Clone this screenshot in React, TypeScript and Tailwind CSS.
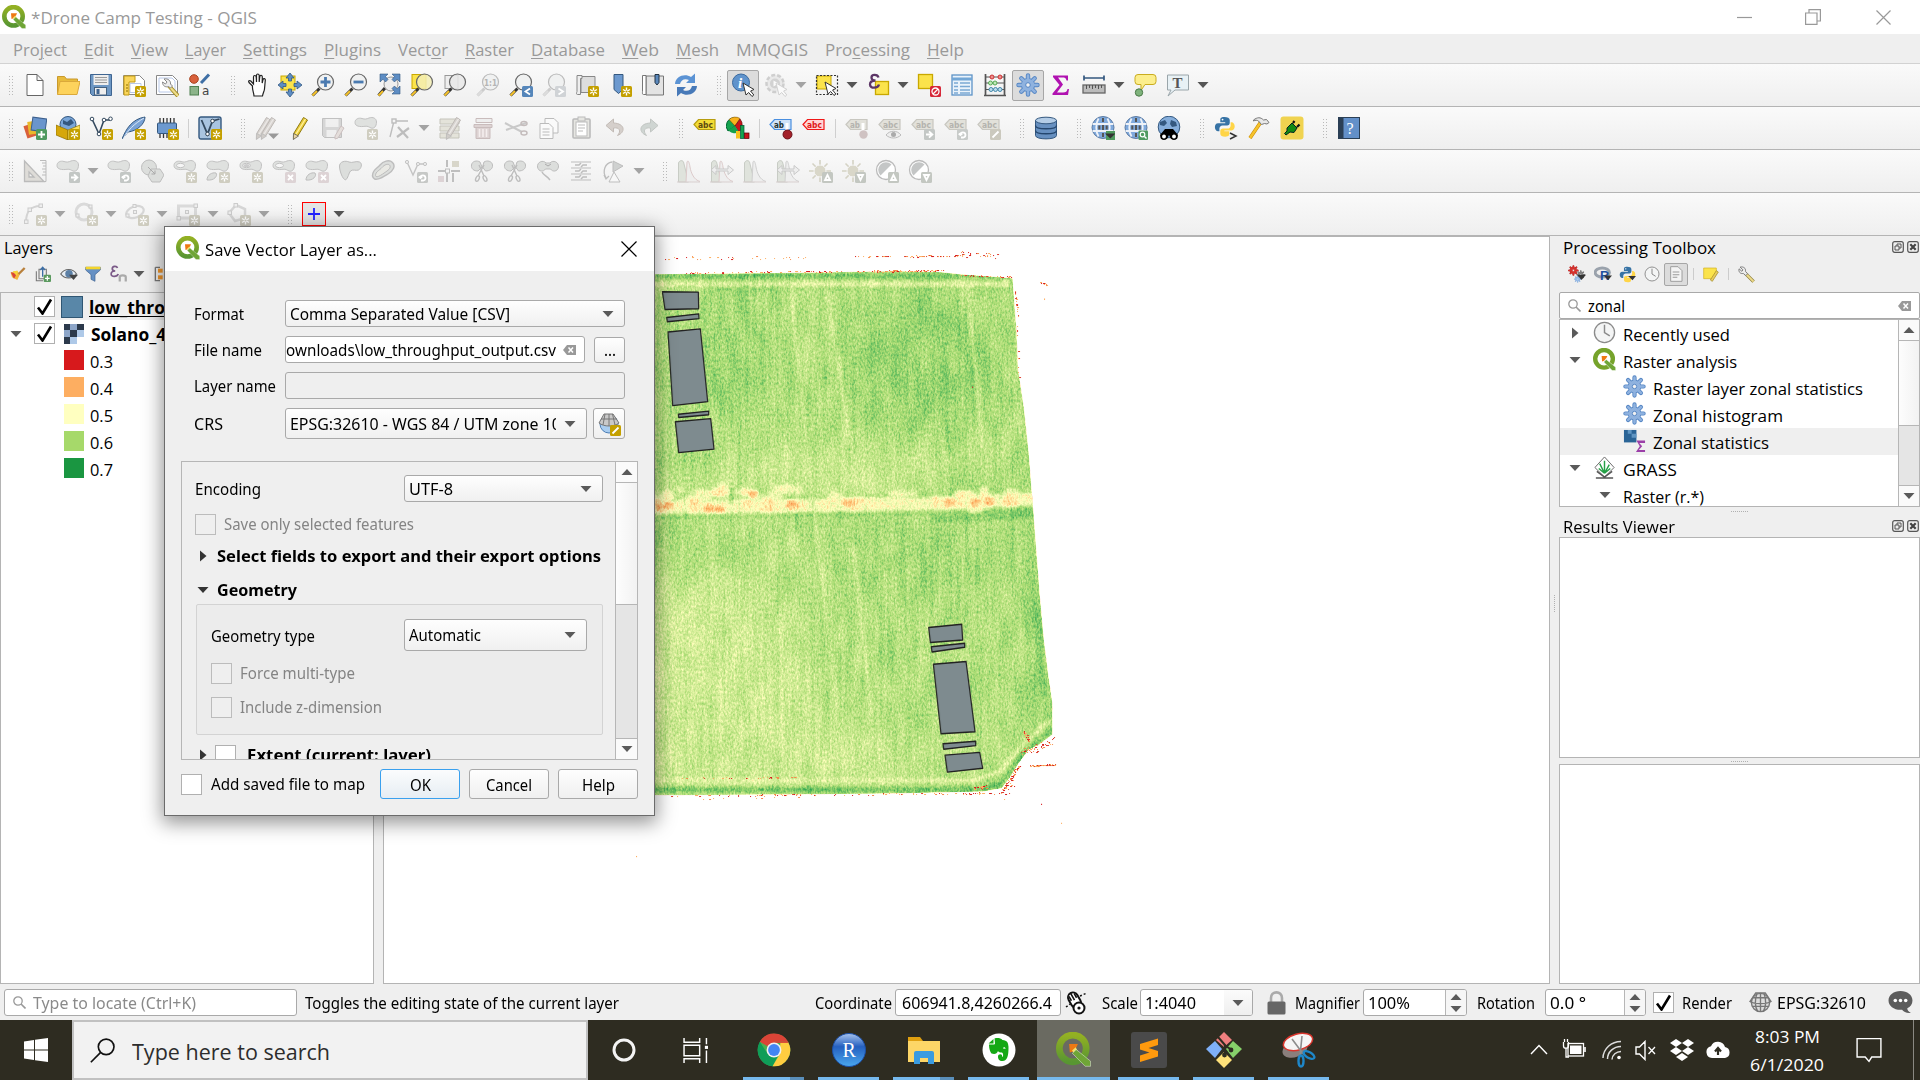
import { useLayoutEffect, useRef, type ReactNode } from "react";

/* ---------- text ---------- */

const UI = "font-['Open_Sans',sans-serif] text-[17.2px]";
const DLG = "font-['Noto_Sans','Open_Sans',sans-serif] text-[16px]";

/** Single-line label whose glyphs are condensed to an exact width. */
function Fit({ w, className = "", children }: { w: number; className?: string; children: ReactNode }) {
  const inner = useRef<HTMLSpanElement>(null);
  useLayoutEffect(() => {
    const el = inner.current;
    if (!el) return;
    el.style.transform = "none";
    const natural = el.getBoundingClientRect().width;
    if (natural > 0) el.style.transform = `scaleX(${w / natural})`;
  }, [w]);
  return (
    <span className={`inline-block shrink-0 whitespace-nowrap ${className}`} style={{ width: w }}>
      <span ref={inner} className="inline-block origin-left whitespace-nowrap">
        {children}
      </span>
    </span>
  );
}

/* ---------- small primitives ---------- */

function Svg({ s = 24, vb = 24, children, className = "" }: { s?: number; vb?: number; children: ReactNode; className?: string }) {
  return (
    <svg width={s} height={s} viewBox={`0 0 ${vb} ${vb}`} className={`block shrink-0 ${className}`}>
      {children}
    </svg>
  );
}

function Tri({ dir = "down", color = "#5a5a5a" }: { dir?: "down" | "up" | "right"; color?: string }) {
  const pts = dir === "down" ? "0.5,3 11.5,3 6,9" : dir === "up" ? "0.5,9 11.5,9 6,3" : "3,0.5 9.5,6 3,11.5";
  return (
    <svg width={12} height={12} viewBox="0 0 12 12" className="block shrink-0">
      <polygon points={pts} fill={color} />
    </svg>
  );
}

function QLogo({ s = 24 }: { s?: number }) {
  return (
    <Svg s={s}>
      <defs>
        <linearGradient id="qg" x1="0" y1="0" x2="0" y2="1">
          <stop offset="0" stopColor="#93b023" />
          <stop offset="1" stopColor="#589632" />
        </linearGradient>
      </defs>
      <circle cx="11.5" cy="11.3" r="9.2" fill="none" stroke="url(#qg)" strokeWidth="4.6" />
      <path d="M9 8.3h6l-1 2.2-2.4 2.8L9.5 14z" fill="#ee7913" />
      <path d="M13.5 10.5l1.6 3-2.8 1.2-1.3-2z" fill="#f7e064" />
      <path d="M13.8 12l-2.6 2.6L20 23.5h3.7V20z" fill="#6fa536" stroke="#fff" strokeWidth=".3" />
    </Svg>
  );
}

/* ---------- icon fragments ---------- */

const Star = ({ g = false, x = 13, y = 13 }: { g?: boolean; x?: number; y?: number }) => (
  <g transform={`translate(${x} ${y})`}>
    <rect width="11" height="11" rx="1.5" fill={g ? "#cfcdc0" : "#c4a000"} />
    <path d="M5.5 1.5v8M2 3.5l7 4M9 3.5l-7 4" stroke="#fff" strokeWidth="1.4" />
    <circle cx="5.5" cy="5.5" r="1" fill={g ? "#cfcdc0" : "#c4a000"} />
  </g>
);
const Badge = ({ fill = "#c9c9c9", d, x = 13, y = 13 }: { fill?: string; d: string; x?: number; y?: number }) => (
  <g transform={`translate(${x} ${y})`}>
    <rect width="11" height="11" rx="1.5" fill={fill} />
    <path d={d} stroke="#fff" strokeWidth="1.8" fill="none" />
  </g>
);
const ARROW = "M2 5.5h6M5 2.3l3.4 3.2L5 8.7";
const TURN = "M4 8.5h2.5a2.6 2.6 0 1 0-3.2-3M1.8 4.5l1.6 1.6 1.8-1.6";
const CROSS = "M3 3l5 5M8 3L3 8";
const PLUS = "M5.5 2v7M2 5.5h7";
const BLOB = "M1 6.500C1 3 4.500 1.500 8 2.500c3 1 4.500.5 7-.5 4-1.500 7.500.5 7.500 4 0 4.500-2.500 7-5.500 6-2-.8-3-2.200-6-1.700C6 11 1 10.500 1 6.500z";
const Blob = ({ hole = false }: { hole?: boolean }) => (
  <g fill="#dfe1df" stroke="#c2c2c2">
    <path d={BLOB} />
    {hole && <ellipse cx="7.500" cy="6.500" rx="4" ry="2.200" fill="#f6f6f6" />}
  </g>
);
const Cursor = ({ x = 12, y = 10, g = false }: { x?: number; y?: number; g?: boolean }) => (
  <path transform={`translate(${x} ${y})`} d="M0 0l3 12 2.700-2.500 3.300 4 1.800-1.500-3.200-4L11 6.500z" fill="#fff" stroke={g ? "#bbb" : "#333"} />
);
const Mag = ({ g = false, fill = "#eef0f0", children }: { g?: boolean; fill?: string; children?: ReactNode }) => (
  <g>
    <path d="M8.500 15.500L1.500 22.500" stroke={g ? "#ccc" : "#333"} strokeWidth="3" />
    <path d="M6 18L1.500 22.500" stroke={g ? "#ddd" : "#f6c32c"} strokeWidth="2" />
    <circle cx="14.500" cy="9" r="8" fill={fill} fillOpacity=".85" stroke={g ? "#bbb" : "#666"} strokeWidth="1.200" />
    {children}
  </g>
);
const Pencil = ({ g = false, x = 0 }: { g?: boolean; x?: number }) => (
  <g transform={`translate(${x} 0)`}>
    <path d="M5 17L14.500 1.500l4 2.500L9 19.500 4.500 23z" fill={g ? "#d8d4d0" : "#eacb3a"} stroke={g ? "#bdb8b5" : "#8f7a10"} />
    <path d="M7 18.200L16.500 3" stroke={g ? "#ebe8e6" : "#fff19a"} strokeWidth="1.300" />
    <path d="M4.500 17.500l5 2.500L4.300 23.500z" fill={g ? "#d0ccc8" : "#e8d3a5"} stroke={g ? "#bbb" : "#555"} strokeWidth=".7" />
  </g>
);
const Tag = ({ fill, stroke, color, text = "abc" }: { fill: string; stroke: string; color: string; text?: string }) => (
  <g>
    <path d="M1 8.500L5.500 3.500H22v10H5.500z" fill={fill} stroke={stroke} strokeWidth="1.200" />
    <text x="5" y="11.500" fontSize="8.500" fontWeight="700" fontFamily="DejaVu Sans" textLength={text.length * 5} lengthAdjust="spacingAndGlyphs" fill={color}>
      {text}
    </text>
  </g>
);
const GTag = ({ text = "abc" }: { text?: string }) => <Tag fill="#e2e1da" stroke="#c8c7c0" color="#b4b3ae" text={text} />;
const Globe = () => (
  <g>
    <circle cx="12" cy="11.500" r="11" fill="#7fa9dc" stroke="#5c7ba3" />
    <path d="M7.500 2.500c-3 5-3 13 0 18M16.500 2.500c3 5 3 13 0 18M1.500 8h21M1.500 15h21" stroke="#eef2f8" strokeWidth="1.800" fill="none" />
    <path d="M12 9v5M8.300 9.500v4M15.700 9.500v4M12 2v4M12 17v4" stroke="#555" strokeWidth="2" fill="none" />
  </g>
);
const Scissors = ({ y = 0 }: { y?: number }) => (
  <g transform={`translate(0 ${y})`} fill="none" stroke="#bdbdbd" strokeWidth="1.400">
    <path d="M8 17L14 6M14 17L9 6" />
    <ellipse cx="7.500" cy="19.500" rx="1.600" ry="3" transform="rotate(25 7.500 19.500)" />
    <ellipse cx="15" cy="19.500" rx="1.600" ry="3" transform="rotate(-25 15 19.500)" />
  </g>
);
const Curve = ({ arrows = false, red = false }: { arrows?: boolean; red?: boolean }) => (
  <g>
    <path d="M1.500 23V4c1-3 4-3 5-1l5 20z" fill="#dfe3dc" stroke="#c8ccc5" />
    <path d="M9 23L10 3c1-2 2-1 3 5s4 13 10 14.500" fill="#eee" stroke={red ? "#dccaca" : "#cfcfcf"} />
    <path d="M0 23h23" stroke="#d8cfcf" />
    {arrows && <path d="M1 11l5-4.500V10h12V6.500L23.500 11 18 15.500V12H6v3.500z" fill="#eee" stroke="#c8c8c8" />}
  </g>
);
const Sun = ({ d }: { d: string }) => (
  <g>
    <path d="M11 1v22M0 12h22M3.500 4.500l15 15M18.500 4.500l-15 15" stroke="#d4d2c4" strokeWidth="1.600" />
    <circle cx="11" cy="12" r="6" fill="#d9d7c9" stroke="#f6f6f6" />
    <Badge fill="#c3c7c1" d={d} />
  </g>
);
const Contrast = ({ d }: { d: string }) => (
  <g>
    <circle cx="11" cy="11" r="9.500" fill="#fff" stroke="#bbb" strokeWidth="1.300" />
    <path d="M5.500 16.500A7.500 7.500 0 0 1 16.500 5.500z" fill="#c4c6c6" />
    <Badge fill="#c3c7c1" d={d} />
  </g>
);
const UPD = "M5.500 3L3 8h5z";
const DND = "M5.500 8L3 3h5z";
const Gear = ({ c = "#8fb2df", o = "#5586c4" }: { c?: string; o?: string }) => (
  <g>
    <g stroke={o} strokeWidth="4.400" strokeLinecap="round">
      <path d="M12 2.500v19M2.500 12h19M5.300 5.300l13.400 13.400M18.700 5.300L5.300 18.700" />
    </g>
    <circle cx="12" cy="12" r="7" fill={o} />
    <g stroke={c} strokeWidth="2.600" strokeLinecap="round">
      <path d="M12 2.500v19M2.500 12h19M5.300 5.300l13.400 13.400M18.700 5.300L5.300 18.700" />
    </g>
    <circle cx="12" cy="12" r="6.200" fill={c} />
    <circle cx="12" cy="12" r="2.300" fill="#f2f2f2" stroke={o} />
  </g>
);
const Clock = () => (
  <g fill="none" stroke="#8a8a8a">
    <circle cx="12" cy="12" r="10.500" fill="#f4f5f5" strokeWidth="1.400" />
    <path d="M12 4v8l5.500 3.500" strokeWidth="1.500" />
  </g>
);
const Python = () => (
  <g>
    <path d="M11.500 1C7 1 7 3 7 4.500V7h5.500v1H4.500C2 8 1 10 1 12.500S2.500 17 4.500 17H6v-3c0-2 1.500-3.500 3.500-3.500h5c2 0 3-1.200 3-3V4.500C17.500 2 15 1 11.500 1z" fill="#3773a5" />
    <path d="M12.500 23c4.500 0 4.500-2 4.500-3.500V17h-5.500v-1h8c2.500 0 3.500-2 3.500-4.500S21.500 7 19.500 7H18.500v3.500c0 2-1.500 3.500-3.500 3.500h-5c-2 0-3 1.200-3 3v2.500c0 2.500 2 3.500 5.500 3.500z" fill="#ffd547" />
    <circle cx="9.500" cy="4" r="1" fill="#fff" />
  </g>
);
const Wrench = () => (
  <g>
    <path d="M10 10l12 12" stroke="#8f8140" strokeWidth="4.800" />
    <path d="M11 11l11 11" stroke="#eedc8a" strokeWidth="2.800" />
    <path d="M3 1.500l4 4-1.500 2-4-3.500C.5 8 3 11.500 7.500 10.500l3.500 3 2.500-2.500-3-3.500C11.500 3 7.500.5 3 1.500z" fill="#eee" stroke="#777" strokeWidth="1.300" />
  </g>
);

/* ---------- toolbar icons ---------- */

const icons: Record<string, ReactNode> = {
  newDoc: <path d="M4 1.500h10l6 6V22.500H4zM14 1.500v6h6" fill="#fff" stroke="#666" />,
  open: <g><path d="M1.500 21V3.500h7l2 2.500h11v3z" fill="#e8bb3c" stroke="#c9992b" /><path d="M1.500 21.500L4 8.500h20L21 21.500z" fill="#fdd35c" stroke="#dba93a" /></g>,
  save: <g><path d="M1.500 1.500h21v21h-19l-2-2z" fill="#6d97c4" stroke="#3f6591" /><rect x="4.500" y="2" width="15" height="10" fill="#eee" /><path d="M6 4.500h12M6 7h12M6 9.500h12" stroke="#999" /><rect x="5.500" y="14.500" width="12" height="7.500" fill="#eee" stroke="#44617f" /><rect x="7.500" y="16" width="3" height="5" fill="#3f6591" /></g>,
  layout: <g><path d="M1.500 2.500h16l5 5v14h-21z" fill="#fff" stroke="#888" /><path d="M8 10.500h11v9H8z" fill="none" stroke="#b8c8e8" /><path d="M2 3h11v6H7v13H2z" fill="#f9d55b" stroke="#c39a10" /><path d="M4 12h2M4 15h2M4 18h2" stroke="#8a6d00" /><Star /></g>,
  layoutMgr: <g><path d="M1.500 2.500h16l5 5v14h-21z" fill="#fff" stroke="#888" /><path d="M4 5h13l3 3v11H4z" fill="none" stroke="#b8c8e8" /><path d="M14 13l9 10" stroke="#a08a20" strokeWidth="4" /><path d="M14 13l9 10" stroke="#eedc8a" strokeWidth="2.300" /><path d="M9 6l3 3-1.500 2-3-2c0 4 3 5.500 6 4.500l2 1.500 2-2-2-2C16 8 13 5 9 6z" fill="#eee" stroke="#888" /></g>,
  style: <g><circle cx="6" cy="6" r="4.300" fill="#d9603b" stroke="#a8431f" /><path d="M13 10l8-8.500" stroke="#3f6fa5" strokeWidth="3" /><rect x="2" y="13.500" width="8.500" height="8.500" fill="#8cb48a" stroke="#4f8050" /><text x="14" y="22" fontSize="12" fontFamily="DejaVu Sans" fill="#444">a</text></g>,
  hand: <path d="M6 13L2.500 9.500C1.500 8 3 7 4.300 8L7 11V4c0-2 2.500-2 2.700 0L10 9V2.500c0-2 2.500-2 2.700 0V9l.6-5.500c.3-1.800 2.500-1.500 2.500.3L15.700 10l.8-3.500c.5-1.500 2.500-1 2.300.7L18 16c-.3 2.500-1.500 4-2 7H7.500c0-3-2-6-1.500-10z" transform="translate(1.500 0)" fill="#fff" stroke="#222" strokeWidth="1.200" />,
  panSel: <g><rect x="3" y="3" width="14" height="14" fill="#fbe34b" stroke="#c9a800" /><path d="M12 0l4 5h-2.500v3h-3V5H8zM12 24l-4-5h2.500v-3h3v3H16zM0 12l5-4v2.500h3v3H5V16zM24 12l-5 4v-2.500h-3v-3h3V8z" fill="#5d8dc4" stroke="#34587f" strokeWidth=".8" /></g>,
  zin: <Mag><path d="M14.500 4v10M9.500 9h10" stroke="#4a7ab0" strokeWidth="2.800" /></Mag>,
  zout: <Mag><path d="M9.500 9h10" stroke="#4a7ab0" strokeWidth="2.800" /></Mag>,
  zfull: <g><path d="M8 15L1.500 22.500" stroke="#333" strokeWidth="3" /><path d="M6 18L1.500 22.500" stroke="#f6c32c" strokeWidth="2" /><circle cx="14" cy="11" r="7" fill="#eee" stroke="#999" /><g fill="#5d8dc4" stroke="#34587f" strokeWidth=".6"><path d="M3 1h8L8.500 3.500l2.500 3L8.500 9 6 6.200 3 9z" /><path d="M23 1h-8l2.500 2.500-2.500 3L17.500 9 20 6.200 23 9z" /><path d="M23 21h-8l2.500-2.500-2.500-3L17.500 13l2.500 2.800L23 13z" /></g></g>,
  zsel: <g><rect x="2" y="1.500" width="14" height="14" fill="#fbe34b" stroke="#c9a800" /><Mag fill="#f3efb5" /></g>,
  zlayer: <g><rect x="2" y="2.500" width="13" height="13" fill="#eee" stroke="#999" /><Mag fill="#e8e8e8" /></g>,
  znative: <Mag g><text x="8" y="12.500" fontSize="9" fontWeight="700" fontFamily="DejaVu Sans" textLength="13" lengthAdjust="spacingAndGlyphs" fill="#b5b5b5">1:1</text></Mag>,
  zlast: <g><Mag /><Badge fill="#5586ba" d="M8 2.500L3.500 5.500 8 8.500" /></g>,
  znext: <g><Mag g /><Badge fill="#d0d3d6" d="M3.500 2.500L8 5.500 3.500 8.500" /></g>,
  mapView: <g><path d="M6 3.500h14v16H6z" fill="#ddd" stroke="#888" /><path d="M2 2.500h5v3H5.500v16h-3c-1.500 0-1-2-.5-3z" fill="#eee" stroke="#888" /><Star /></g>,
  bookmarkNew: <g><path d="M6 1.500h9v15l-4.500 4-4.500-4z" fill="#6c99cf" stroke="#34587f" /><Star /></g>,
  bookmarks: <g><path d="M5 3h17.500v19H5z" fill="#e3e3e3" stroke="#777" /><path d="M1.500 2.500H5v19H2.500c-1.500 0-1-2-1-3z" fill="#fff" stroke="#777" /><path d="M14 1.500h4v8l-2 2.500-2-2.500z" fill="#5b89bd" stroke="#234" /></g>,
  refresh: <g fill="#5b93d4"><path d="M1 11C1.500 3 11 0 17 4l4-3.500V10h-9l3-3C11 5 7 6.500 6 11z" /><path d="M23 13C22.500 21 13 24 7 20l-4 3.500V14h9l-3 3c4 2 8 .5 9-4z" fill="#4779b8" /></g>,
  identify: <g><circle cx="10" cy="9.500" r="8.500" fill="#5f93cc" stroke="#3b6ba0" /><text x="7" y="15" fontSize="15" fontStyle="italic" fontWeight="700" fontFamily="Liberation Serif" fill="#fff">i</text><Cursor /></g>,
  action: <g opacity=".6"><circle cx="11" cy="10.500" r="8.500" fill="#e2e2e2" stroke="#b5b5b5" strokeWidth="2.500" strokeDasharray="4 2" /><circle cx="11" cy="10.500" r="5" fill="#bbb" /><path d="M9.500 7.500l5 3-5 3z" fill="#fff" /><Cursor g /></g>,
  select: <g><rect x="2" y="3" width="14" height="13" fill="#fbe34b" stroke="#c9a800" /><rect x="1.500" y="2.500" width="21" height="19" fill="none" stroke="#333" strokeWidth="1.200" strokeDasharray="2 1.500" /><Cursor x={10} y={9} /></g>,
  expr: <g><rect x="9.500" y="8.500" width="13" height="13" fill="#fbe34b" stroke="#c9a800" strokeWidth="1.300" /><path d="M12.500 4.500C11.500 1 5.500 1 5.500 4.500c0 2.300 2 3 4 3-3 0-5.500 1-5.500 4 0 4.500 8 4 9 0" fill="none" stroke="#5c3566" strokeWidth="2.300" /></g>,
  deselect: <g><rect x="1.500" y="1.500" width="14" height="14" fill="#fbe34b" stroke="#c9a800" strokeWidth="1.300" /><rect x="13" y="13" width="11" height="11" rx="1.500" fill="#d62839" /><circle cx="18.500" cy="18.500" r="3.500" fill="none" stroke="#fff" strokeWidth="1.300" /><path d="M16 21l5-5" stroke="#fff" strokeWidth="1.300" /></g>,
  table: <g><rect x="2" y="2" width="20" height="20" fill="#eaf3fb" stroke="#5d93c6" strokeWidth="1.300" /><path d="M2 6h20" stroke="#73a7d6" strokeWidth="3" /><path d="M4 10h4M4 13.500h4M4 17h4M10 10h10M10 13.500h10M10 17h10M4 20h4M10 20h10" stroke="#7ba9d4" strokeWidth="1.300" /></g>,
  abacus: <g><path d="M2.500 1v21M21.500 1v21M1 22.500h22" stroke="#555" strokeWidth="1.700" fill="none" /><path d="M3 4h18M3 10h18M3 16.500h18" stroke="#555" /><g fill="#ef8d8d" stroke="#c33"><circle cx="9" cy="4" r="2" /><circle cx="17" cy="4" r="2" /></g><g fill="#bfe8b8" stroke="#5a5"><circle cx="7.500" cy="10" r="2" /><circle cx="12" cy="10" r="2" /></g><g fill="#b9dcee" stroke="#48a"><circle cx="8" cy="16.500" r="2" /><circle cx="12.500" cy="16.500" r="2" /><circle cx="17" cy="16.500" r="2" /></g></g>,
  gear: <Gear />,
  sigma: <path d="M4 2.500h15v5h-1.500C17 5 16 4.500 13 4.500H9l5 7-6 8h6c3 0 4-1 4.500-3.500H20l-1 6H3.500v-1.500l7-8.500L4 4z" fill="#b012b0" />,
  ruler: <g><path d="M2 5h20M2 2.500v5M22 2.500v5" stroke="#34587f" strokeWidth="1.700" /><rect x="1" y="12" width="22" height="8" fill="#bbb" stroke="#666" strokeWidth="1.300" /><path d="M4.500 12v4M7.500 12v3M10.500 12v4M13.500 12v3M16.500 12v4M19.500 12v3" stroke="#555" /></g>,
  tips: <g><path d="M5 1.500h15q3 0 3 3v4q0 3-3 3h-8l-4 6v-6H5q-3 0-3-3v-4q0-3 3-3z" fill="#fcee8c" stroke="#c9ac20" /><circle cx="6" cy="19.500" r="3.700" fill="#7fb37c" stroke="#4a7a48" /></g>,
  textAnn: <g><path d="M1.500 2h21v15H9l-7 6 3-6H1.500z" fill="#e8f1f5" stroke="#9aa5aa" /><text x="6.500" y="14.500" fontSize="15" fontWeight="700" fontFamily="Liberation Serif" fill="#555">T</text></g>,

  dsm: <g><rect x="2" y="8" width="13" height="13" fill="#d9603b" transform="rotate(-18 8 14)" /><rect x="5" y="5" width="13" height="13" fill="#e9b92b" transform="rotate(-8 11 11)" /><rect x="9" y="2" width="14" height="13" fill="#6a95cc" stroke="#3c5f8c" transform="rotate(8 16 8)" /><Badge fill="#4f9a5f" d={PLUS} /></g>,
  gpkg: <g><circle cx="12" cy="8.500" r="8" fill="#7aa6d8" stroke="#34587f" /><path d="M7 4l4 2 4-3 3 4-5 3-6-2z" fill="#34587f" /><path d="M0 9l12 5v10L0 19z" fill="#d6a70a" stroke="#8a6d00" strokeWidth=".7" /><path d="M24 9l-12 5v10l12-5z" fill="#fde25c" stroke="#8a6d00" strokeWidth=".7" /><Star /></g>,
  shp: <g><path d="M3 3l7 15 5-14h6" fill="none" stroke="#34495e" strokeWidth="1.600" /><g fill="#fff" stroke="#34495e"><circle cx="3" cy="3" r="1.800" /><circle cx="10" cy="18" r="1.800" /><circle cx="15" cy="4" r="1.800" /><circle cx="21.500" cy="2.800" r="1.800" /></g><Star /></g>,
  feather: <g><path d="M0 23C4 13 10 3 23 1c0 7-8 14-17 15z" fill="#7aa3d6" stroke="#34587f" /><path d="M1 23C6 14 12 8 22 2" stroke="#dce8f6" fill="none" /><Star /></g>,
  chip: <g><path d="M5 2v20M8.500 2v20M12 2v20M15.500 2v20M19 2v20" stroke="#333" strokeWidth="1.300" /><rect x="2.500" y="7" width="19" height="10.500" rx="1" fill="#6c99cf" stroke="#34587f" /><Star /></g>,
  virtual: <g><rect x="1" y="1" width="22" height="22" rx="2" fill="#a9c4e0" stroke="#34587f" strokeWidth="1.400" /><path d="M3.500 4l6 14 5-13 7-2" fill="none" stroke="#34495e" strokeWidth="1.800" /><circle cx="9.500" cy="18" r="1.800" fill="#fff" stroke="#345" /><circle cx="14.500" cy="5" r="1.800" fill="#fff" stroke="#345" /><Star /></g>,
  edits: <g><g transform="translate(-3 0)"><Pencil g /></g><g transform="translate(2 0)"><Pencil g /></g><path d="M13 17.500h11l-5.500 5.500z" fill="#999" /></g>,
  pencil: <Pencil x={1} />,
  saveG: <g opacity=".75"><path d="M1.500 2.500h19v19h-17l-2-2z" fill="#ccc" stroke="#b0b0b0" /><rect x="4.500" y="3" width="13" height="8" fill="#eee" /><rect x="5.500" y="14" width="10" height="7" fill="#eee" /><path d="M14 20l6-10 3 2-6 10-3 1z" fill="#e0d8d4" stroke="#c0b0b0" /></g>,
  addPoly: <g><Blob /><Star g /></g>,
  vertex: <g stroke="#bdbdbd" fill="none" strokeWidth="1.400"><path d="M3 21L7 5h14" /><rect x="5" y="3" width="4" height="4" fill="#f4f4f4" /><path d="M10 21l12-9M11 11l10 11" strokeWidth="2.200" /></g>,
  multi: <g><path d="M2 3h19v5H2zM2 10h19v5H2zM2 17h19v5H2z" fill="#e4e3da" stroke="#c5c4bb" /><g transform="translate(4 0)"><Pencil g /></g></g>,
  trash: <g fill="#ddd3d3" stroke="#c9bcbc"><path d="M5 2.500h16v4H5z" fill="#eee" /><path d="M3 8.500h18v3H3z" /><path d="M5 11.500h14v11H5z" /><path d="M8.500 13v8M12 13v8M15.500 13v8" stroke="#f4eeee" strokeWidth="1.600" /></g>,
  cut: <g stroke="#c4bcbc" fill="none" strokeWidth="1.500"><path d="M1 7l17 9M2 14l20-7" stroke="#c9c9c9" strokeWidth="2" /><ellipse cx="20" cy="7.500" rx="3" ry="2" /><ellipse cx="20" cy="17" rx="3" ry="2" /></g>,
  copy: <g fill="#fafafa" stroke="#bbb"><path d="M8 2.500h9l4 4V17H8z" /><path d="M3 7.500h9l4 4v11H3z" /><path d="M5.500 13h7M5.500 16h7M5.500 19h7" /></g>,
  paste: <g fill="#e6e6e2" stroke="#bbb"><rect x="3" y="3" width="17" height="19" rx="1" strokeWidth="1.600" /><rect x="6" y="6" width="11" height="14" fill="#fff" /><rect x="8" y="1" width="7" height="4" /><path d="M8 9h7M8 12h7M8 15h5" /></g>,
  undo: <path transform="translate(1.500 0)" d="M9 3L1.500 9.500 9 16v-4c6-1 8 3 4 7.500 8-3 8-12-4-12.500z" fill="#d5cfcb" stroke="#c2bbb6" />,
  redo: <path transform="translate(-.5 0)" d="M15 3l7.500 6.500L15 16v-4c-6-1-8 3-4 7.500-8-3-8-12 4-12.500z" fill="#cfd5d2" stroke="#c2c6c3" />,
  label: <Tag fill="#f3dc36" stroke="#b79d10" color="#5c4a10" />,
  diagram: <g><path d="M9 10V2A8 8 0 0 0 2 15z" fill="#14a34f" stroke="#063" /><path d="M9 10L3 3.500A9 9 0 0 1 14 2.500z" fill="#f8b21d" stroke="#640" strokeWidth=".5" /><path d="M9 10l5-7a9 9 0 0 1-1 13z" fill="#c8141c" stroke="#500" strokeWidth=".6" /><path d="M2.500 14L9 10l4 6a8 8 0 0 1-10-1z" fill="#16a04c" /><rect x="10" y="15" width="4" height="7.500" fill="#f8c21d" /><rect x="14.500" y="9.500" width="3.500" height="13" fill="#14a34f" stroke="#053" strokeWidth=".7" /><rect x="18.500" y="17" width="4.500" height="5.500" fill="#c8141c" stroke="#500" strokeWidth=".7" /></g>,
  pinAb: <g><Tag fill="#cfe2f8" stroke="#4a8fe0" color="#233" text="ab" /><path d="M18 7v8" stroke="#fff" strokeWidth="3" /><circle cx="18.500" cy="18.500" r="4.500" fill="#a32029" stroke="#6a1018" /></g>,
  redAbc: <Tag fill="#ffd5d5" stroke="#f01818" color="#e01818" />,
  tPin: <g><GTag text="ab" /><path d="M18 7v8" stroke="#fff" strokeWidth="3" /><circle cx="18.500" cy="18.500" r="4.200" fill="#cfc2c2" /></g>,
  tEye: <g><GTag /><path d="M8 19c4-5 11-5 15 0-4 4-11 4-15 0z" fill="#eee" stroke="#bbb" /><circle cx="15.500" cy="18.500" r="2.500" fill="#aaa" /></g>,
  tMove: <g><GTag /><Badge fill="#c3c7c5" d={ARROW} /></g>,
  tRot: <g><GTag /><Badge fill="#c8cbc9" d={TURN} /></g>,
  tEdit: <g><GTag /><Badge fill="#cbc9be" d="M2.500 8.500l6-6" /></g>,
  db: <g stroke="#34587f" fill="#6790c0"><path d="M1.500 4.500v15c0 4.500 21 4.500 21 0v-15z" /><ellipse cx="12" cy="4.500" rx="10.500" ry="3.300" fill="#b3cce6" /><path d="M1.500 9.500c0 4.300 21 4.300 21 0M1.500 14.500c0 4.300 21 4.300 21 0" fill="none" stroke="#24466d" strokeWidth="1.300" /></g>,
  globeDl: <g><Globe /><rect x="15" y="15" width="9" height="9" fill="#4f9a5f" /><path d="M14 17.500h10.500l-5.200 5z" fill="#333" /></g>,
  globeSearch: <g><Globe /><rect x="14.500" y="14.500" width="9.500" height="9.500" rx="1" fill="#4f9a5f" /><circle cx="18.500" cy="18.500" r="2.300" fill="none" stroke="#fff" strokeWidth="1.200" /><path d="M20.500 20.500l2 2" stroke="#fff" strokeWidth="1.400" /></g>,
  globeBino: <g><circle cx="12" cy="11" r="10.800" fill="#86aedb" stroke="#34587f" /><path d="M3 6l5-2 2 3-3 3-4-1zM14 4l5 2 1 4-5 1-2-3z" fill="#34587f" /><path d="M8 13h8l5 6-1 4h-6l-2-4-2 4H4l-1-4z" fill="#000" /><circle cx="7" cy="20.500" r="2.700" fill="#fff" stroke="#000" strokeWidth="1.500" /><circle cx="17" cy="20.500" r="2.700" fill="#fff" stroke="#000" strokeWidth="1.500" /></g>,
  python: <g><g transform="scale(.9)"><Python /></g><path d="M16 17l6 3-6 3" fill="none" stroke="#333" strokeWidth="1.500" /></g>,
  hammer: <g><path d="M3 22L13.500 6.500" stroke="#c98a00" strokeWidth="3.600" /><path d="M3 22L13.500 6.500" stroke="#f6c32c" strokeWidth="2.400" /><path d="M6.500 4c4-3 7-3 10 0l3-.5 2.500 3-2 1.500-2.500-.5-3 1-3-3.500c-1.500-1-3-1-5 0z" fill="#e8e8e8" stroke="#777" /></g>,
  plug: <g><rect x=".5" y=".5" width="23" height="23" rx="3" fill="#f0d350" /><path d="M7 12l5-5 5 5-3 4.500-4-.5-4 3-1.500-1.500L7 15z" fill="#128a12" stroke="#022" /><path d="M13 7l1.500-2M17 11l2.500-2.500" stroke="#111" strokeWidth="2.200" /></g>,
  help: <g><rect x="1.500" y="1.500" width="21" height="21" fill="#6390c9" stroke="#2b3f55" /><rect x="2" y="2" width="4.500" height="20" fill="#2b3f55" /><text x="9.500" y="17.500" fontSize="16" fontFamily="Liberation Serif" fill="#fff">?</text></g>,

  setsq: <g fill="#dedcd8" stroke="#bbb"><path d="M1.500 2L21 22.500H1.500zM6 13l5 5H6z" fillRule="evenodd" strokeWidth="1.300" /><path d="M17 1.500h6v21h-6" fill="none" /><path d="M19 4h4M20 7h3M19 10h4M20 13h3M19 16h4" /></g>,
  move: <g><Blob /><Badge fill="#c3c7c5" d={ARROW} /></g>,
  rotate: <g><Blob /><Badge fill="#c3c7c5" d={TURN} /></g>,
  simplify: <g fill="#dcdedc" stroke="#bdbdbd"><circle cx="9" cy="8.500" r="7.500" /><path d="M11 10h9l4 6-4 7h-8l-4-6z" /><path d="M8 8l7 7m0-3.500V15h-3.500" fill="none" stroke="#aaa" /></g>,
  addRing: <g><Blob hole /><Star g /></g>,
  addPart: <g><Blob /><path d="M1 21c0-5 5-8 9-7 2 2-1 8-9 7z" fill="#dcdedc" stroke="#bdbdbd" /><Star g /></g>,
  fillRing: <g><Blob hole /><ellipse cx="7.500" cy="6.500" rx="3" ry="1.500" fill="#ccc" /><Star g /></g>,
  delRing: <g><Blob hole /><Badge fill="#ddd3d5" d={CROSS} /></g>,
  delPart: <g><Blob /><path d="M1 21c0-5 5-8 9-7 2 2-1 8-9 7z" fill="#dcdedc" stroke="#bdbdbd" /><Badge fill="#ddd3d5" d={CROSS} /></g>,
  reshape: <path d="M1.500 8C1 2 8 1.500 11 3s7-1.500 10.500 0 1.500 7-1 8-6-1-8 1-2 7-5 9c-3-1-5.500-8-6-13z" fill="#dcdedc" stroke="#bdbdbd" />,
  offset: <g fill="#dcdedc" stroke="#bdbdbd"><path d="M1.500 17C1 11 6 9.500 9 6s9-6 12.500-2.500S22 12 17 15 3 24 1.500 17z" strokeWidth="1.400" /><path d="M4.500 16.500c0-4 4-5 6.500-8s6-4 7.500-2.500.5 4-2.500 6-11 8.500-11.500 4.500z" fill="#e9e9e4" /></g>,
  reverse: <g><path d="M3 3l6 13 5-11h8" fill="none" stroke="#c4c4c4" strokeWidth="1.400" /><g fill="#eee" stroke="#c4c4c4"><circle cx="3" cy="3" r="1.600" /><circle cx="14" cy="5" r="1.600" /><circle cx="21" cy="5" r="1.600" /></g><Badge fill="#c6c8c6" d={TURN} /></g>,
  trim: <g stroke="#bfbfbf" strokeWidth="2" fill="none"><path d="M10 1v7M10 14v9M1 12h7M14 12h9M16 14v9" /><rect x="8.500" y="10" width="4" height="4" strokeWidth="1" /><path d="M15 2h7v6h-7z" fill="#d8d6ca" stroke="none" /><path d="M1 17h6v6H1z" fill="#ddd3d5" stroke="none" /></g>,
  splitF: <g><g fill="#dcdedc" stroke="#bdbdbd"><path d="M1.500 6C2 2 7 1 10 3l2 5-4 4C4 12 1 10 1.500 6z" /><path d="M22.500 6C22 2 17 1 14 3l-1.500 5 3 4c4 0 7.500-2 7-6z" /></g><Scissors /></g>,
  mergeF: <g fill="#dcdedc" stroke="#bdbdbd"><path d="M1.500 8C1 3 7 .5 10 4h4c3-3.500 9-1 8.500 4-1 5-6 5-8 2h-5c-2 3-7 3-8-2z" /><path d="M6 13c2 4 4 3 8 8" fill="none" strokeWidth="1.500" /><path d="M9 5l3 2 3-2" fill="none" stroke="#aaa" /></g>,
  mergeA: <g stroke="#bdbdbd" fill="none"><path d="M2 3h20M2 9h20M2 15h20M2 21h20" /><path d="M6 6h4l2-2M18 6h-4l-2 2M6 12h4l2-2M18 12h-4l-2 2M6 18h4l2-2M18 18h-4l-2 2" strokeWidth="1.500" /></g>,
  rotSym: <g fill="#e8e8e8" stroke="#bdbdbd"><path d="M10 3C3 4 0 12 4 19M2 16l2 4 3-3" fill="none" strokeWidth="1.300" /><path d="M11 2l10 5-10 6z" fill="#cfd1d0" /><path d="M12 13l6 10H7z" fill="#f7f7f7" /></g>,
  c1: <Curve red />, c2: <Curve arrows red />, c3: <Curve />, c4: <Curve arrows />,
  s1: <Sun d={UPD} />, s2: <Sun d={DND} />, k1: <Contrast d={UPD} />, k2: <Contrast d={DND} />,

  d1: <g><path d="M3 20C3 10 8 4 17 4" fill="none" stroke="#d3d3d3" strokeWidth="2" /><g fill="#eee" stroke="#ccc"><rect x="1.500" y="18" width="3.500" height="3.500" /><rect x="5" y="6" width="3.500" height="3.500" /><rect x="16" y="2" width="3.500" height="3.500" /></g><Star g /></g>,
  d2: <g><circle cx="10" cy="10" r="8" fill="none" stroke="#dadada" strokeWidth="3" /><g fill="#eee" stroke="#ccc"><rect x="2" y="12" width="3" height="3" /><rect x="15" y="3" width="3" height="3" /></g><Star g /></g>,
  d3: <g><ellipse cx="10" cy="10" rx="9" ry="5.500" transform="rotate(-20 10 10)" fill="none" stroke="#d6d6d6" strokeWidth="2.200" /><g fill="#eee" stroke="#ccc"><rect x="8.500" y="8.500" width="3" height="3" /><rect x="8" y="2.500" width="3" height="3" /><rect x="1" y="12" width="3" height="3" /></g><Star g /></g>,
  d4: <g><rect x="2.500" y="4" width="17" height="12" fill="none" stroke="#dadada" strokeWidth="3" /><g fill="#eee" stroke="#ccc"><rect x="9.500" y="8.500" width="3" height="3" /><rect x="18" y="2" width="3.500" height="3.500" /><rect x="1" y="14.500" width="3.500" height="3.500" /></g><Star g /></g>,
  d5: <g><path d="M9 3l9 4v9l-10 3-6-8z" fill="none" stroke="#d6d6d6" strokeWidth="2.500" /><g fill="#eee" stroke="#ccc"><rect x="7" y="1.500" width="3.500" height="3.500" /><rect x="1" y="9" width="3.500" height="3.500" /></g><Star g /></g>,
};

/** Toolbar description: "|" grip, "/" separator, "v" dark arrow, "w" disabled arrow, "*name" pressed button. */
const rows: string[] = [
  "| newDoc open save layout layoutMgr style | hand panSel zin zout zfull zsel zlayer znative zlast znext mapView bookmarkNew bookmarks refresh | *identify action w select v expr v deselect table abacus *gear sigma ruler v tips textAnn v",
  "| dsm gpkg shp feather chip / virtual | edits pencil saveG addPoly vertex w multi trash cut copy paste undo redo | label diagram / pinAb redAbc / tPin tEye tMove tRot tEdit | db | globeDl globeSearch globeBino | python hammer plug | help",
  "| setsq move w rotate simplify addRing addPart fillRing delRing delPart reshape offset reverse trim splitF splitF mergeF mergeA rotSym w | c1 c2 c3 c4 s1 s2 k1 k2",
  "| d1 w d2 w d3 w d4 w d5 w | plus v",
];

function Grip() {
  return (
    <div className="flex w-6 shrink-0 justify-end pr-[5px]">
      <svg width="5" height="19" viewBox="0 0 5 19">
        <g fill="#b9b9b9">
          {[0, 3, 6, 9, 12, 15, 18].map((y) => (
            <g key={y}>
              <rect x="0" y={y} width="1" height="1" />
              <rect x="3" y={y} width="1" height="1" />
            </g>
          ))}
        </g>
      </svg>
    </div>
  );
}

function Toolbar({ spec }: { spec: string }) {
  return (
    <div className="flex h-[43px] items-center border-b border-[#b4b4b4] bg-linear-to-b from-[#fafafa] to-[#efefef]">
      <div className="-ml-[5.5px] flex items-center">
        {spec.split(" ").map((t, i) => {
          if (t === "|") return <Grip key={i} />;
          if (t === "/") return <div key={i} className="ml-[4.5px] mr-[4.5px] h-[19px] w-px bg-[#cfcfcf]" />;
          if (t === "v" || t === "w")
            return (
              <div key={i} className="flex w-[18px] justify-start pl-[2px]">
                <Tri color={t === "v" ? "#555" : "#a3a3a3"} />
              </div>
            );
          if (t === "plus")
            return (
              <div key={i} className="flex w-[33px] justify-center">
                <div className="flex size-6 items-center justify-center border border-[#f00] bg-[#e4e4e4]">
                  <Svg s={12} vb={12}>
                    <path d="M6 0v12M0 6h12" stroke="#22f" strokeWidth="1.800" />
                  </Svg>
                </div>
              </div>
            );
          if (t[0] === "*")
            return (
              <div key={i} className="flex w-[33px] justify-center">
                <div className="flex h-[31px] w-8 items-center justify-center rounded-[2px] border border-[#a6a6a6] bg-[#dcdcdc]">
                  <Svg>{icons[t.slice(1)]}</Svg>
                </div>
              </div>
            );
          return (
            <div key={i} className="flex w-[33px] justify-center">
              <Svg>{icons[t]}</Svg>
            </div>
          );
        })}
      </div>
    </div>
  );
}

const menus: [string, string, string, number][] = [
  ["Pro", "j", "ect", 54], ["", "E", "dit", 30], ["", "V", "iew", 37], ["", "L", "ayer", 41], ["", "S", "ettings", 64],
  ["", "P", "lugins", 57], ["Vect", "o", "r", 50], ["", "R", "aster", 49], ["", "D", "atabase", 74], ["", "W", "eb", 37],
  ["", "M", "esh", 43], ["MMQGIS", "", "", 72], ["Pro", "c", "essing", 85], ["", "H", "elp", 37],
];

/* ---------- map ---------- */

const FIELD = "30,112 480,108 780,104 900,106 960,112 1118,122 1124,190 1130,260 1134,350 1152,450 1166,560 1178,690 1190,820 1200,930 1212,1040 1224,1120 1238,1200 1238,1275 1200,1300 1165,1315 1135,1350 1110,1385 1085,1412 1030,1420 700,1426 30,1430";
const PLOTS = [
  "67,156 175,157 176,199 75,201", "80,221 176,212 177,224 82,232", "84,258 181,250 203,434 98,444",
  "115,466 206,458 206,467 116,474", "106,485 212,477 222,554 116,563", "866,1005 965,997 968,1037 871,1043",
  "874,1054 974,1045 974,1055 876,1067", "880,1098 978,1091 1005,1269 903,1274", "909,1299 1007,1293 1007,1304 911,1313",
  "915,1328 1019,1321 1028,1361 922,1371",
];
const TO_PX = "translate(256 -7) scale(0.33333 0.3954)";

function lcg(seed: number) {
  let s = seed;
  return () => {
    s = (s * 1664525 + 1013904223) % 4294967296;
    return s / 4294967296;
  };
}

/** Scattered outlier pixels: [x0, y0, x1, y1, spread, count]. */
const SPECKS: [number, number, number, number, number, number][] = [
  [50, 70, 560, 69, 7, 30], [640, 67, 800, 66, 3, 16], [810, 66, 970, 64, 5, 40], [960, 60, 1080, 66, 16, 24],
  [130, 107, 760, 104, 3, 80], [700, 103, 910, 103, 4, 60], [960, 114, 1118, 119, 3, 30], [1124, 150, 1134, 225, 7, 18],
  [1130, 240, 1136, 380, 4, 10], [1200, 132, 1220, 139, 4, 14], [1150, 1268, 1165, 1288, 12, 24],
  [1170, 1355, 1245, 1352, 3, 50], [1140, 1325, 1245, 1290, 20, 50], [1085, 1420, 1140, 1350, 12, 44],
  [720, 1426, 1085, 1424, 4, 44], [60, 1430, 700, 1428, 4, 50], [110, 1386, 470, 1384, 4, 26], [180, 1438, 480, 1434, 5, 8],
  [1090, 1425, 1130, 1390, 34, 12], [1000, 1410, 1040, 1408, 8, 18],
];
const SPECK_COLORS = ["#d7191c", "#dd4030", "#fdae61", "#fdae61", "#f58a4b"];

function Specks() {
  const r = lcg(7);
  return (
    <g>
      {SPECKS.flatMap(([x0, y0, x1, y1, sp, n], k) =>
        Array.from({ length: n }, (_, i) => {
          const t = r();
          const x = Math.round((x0 + (x1 - x0) * t) / 3) * 3;
          const y = Math.round((y0 + (y1 - y0) * t + (r() - 0.5) * sp) / 2.529) * 2.529;
          return <rect key={`${k}-${i}`} x={x} y={y} width={r() > 0.7 ? 6 : 3} height="2.529" fill={SPECK_COLORS[Math.floor(r() * 5)]} />;
        })
      )}
      <rect x="996" y="396" width="3" height="3" fill="#d7191c" />
      <rect x="1203" y="1451" width="3" height="3" fill="#d7191c" />
      <rect x="1263" y="1499" width="3" height="3" fill="#fdae61" />
      <rect x="1212" y="173" width="3" height="4" fill="#fdae61" />
      <rect x="-12" y="1583" width="3" height="3" fill="#fdae61" />
    </g>
  );
}

function MapCanvas() {
  const r = lcg(21);
  const patches = Array.from({ length: 46 }, () => ({
    x: 40 + r() * 1130, y: 650 + r() * 58, rx: 9 + r() * 24, ry: 6 + r() * 9, v: 92 + Math.round(r() * 35),
  }));
  return (
    <svg width="1165" height="746" viewBox="0 0 1165 746" className="block">
      <defs>
        <filter id="field" x="230" y="20" width="460" height="560" filterUnits="userSpaceOnUse" colorInterpolationFilters="sRGB">
          <feTurbulence type="fractalNoise" baseFrequency="0.6 0.35" numOctaves="2" seed="3" />
          <feColorMatrix values="0 0 0 1 0  0 0 0 1 0  0 0 0 1 0  0 0 0 0 1" result="fine" />
          <feTurbulence type="fractalNoise" baseFrequency="0.26 0.011" numOctaves="3" seed="11" />
          <feColorMatrix values="0 0 0 1 0  0 0 0 1 0  0 0 0 1 0  0 0 0 0 1" result="stripe" />
          <feTurbulence type="fractalNoise" baseFrequency="0.06 0.03" numOctaves="3" seed="5" />
          <feColorMatrix values="0 0 0 1 0  0 0 0 1 0  0 0 0 1 0  0 0 0 0 1" result="broad" />
          <feComposite in="SourceGraphic" in2="fine" operator="arithmetic" k2="1" k3="0.36" k4="-0.18" result="a" />
          <feComposite in="a" in2="stripe" operator="arithmetic" k2="1" k3="0.15" k4="-0.075" result="b" />
          <feComposite in="b" in2="broad" operator="arithmetic" k2="1" k3="0.14" k4="-0.07" />
          <feComponentTransfer>
            <feFuncR type="table" tableValues="0.84 0.99 1 0.66 0.16" />
            <feFuncG type="table" tableValues="0.1 0.68 1 0.86 0.64" />
            <feFuncB type="table" tableValues="0.11 0.38 0.74 0.45 0.31" />
          </feComponentTransfer>
          <feComposite in2="SourceAlpha" operator="in" />
        </filter>
        <filter id="soft" x="0" y="60" width="1300" height="1400" filterUnits="userSpaceOnUse"><feGaussianBlur stdDeviation="4" /></filter>
        <filter id="softer" x="-100" y="0" width="1500" height="1600" filterUnits="userSpaceOnUse"><feGaussianBlur stdDeviation="45" /></filter>
        <clipPath id="fieldClip"><polygon points={FIELD} /></clipPath>
      </defs>
      <g filter="url(#field)">
        <g transform={TO_PX}>
          <g clipPath="url(#fieldClip)">
            <rect x="20" y="90" width="1250" height="1360" fill="#b5b5b5" />
            <g filter="url(#softer)">
              <ellipse cx="200" cy="1150" rx="330" ry="280" fill="#a3a3a3" />
              <ellipse cx="560" cy="1330" rx="300" ry="80" fill="#a3a3a3" />
              <ellipse cx="560" cy="620" rx="330" ry="60" fill="#a3a3a3" />
              <ellipse cx="850" cy="330" rx="240" ry="170" fill="#c4c4c4" />
              <ellipse cx="260" cy="320" rx="150" ry="150" fill="#c1c1c1" />
              <ellipse cx="820" cy="830" rx="240" ry="90" fill="#bebebe" />
              <ellipse cx="1215" cy="950" rx="35" ry="320" fill="#d4d4d4" />
            </g>
            <g filter="url(#soft)" fill="none">
              <path d="M30 137H1110" stroke="#949494" strokeWidth="12" />
              <path d="M30 116H1110" stroke="#d8d8d8" strokeWidth="12" />
              <path d="M200 150H1110" stroke="#c2c2c2" strokeWidth="7" />
              <path d="M30 702L560 697L900 691L1180 680" stroke="#848484" strokeWidth="34" />
              <path d="M30 726L560 720L900 715L1185 704" stroke="#c6c6c6" strokeWidth="8" />
              <path d="M880 730L1190 716" stroke="#d0d0d0" strokeWidth="26" />
              <path d="M350 676L980 668" stroke="#c5c5c5" strokeWidth="4" />
              <path d="M450 130L520 700L560 980L620 1400M560 150L650 640M980 130L1010 380L1030 560M520 700L550 900" stroke="#9c9c9c" strokeWidth="8" />
              <path d="M640 800L690 1180L710 1400" stroke="#9a9a9a" strokeWidth="9" />
              <path d="M40 1392H1000L1080 1368L1150 1300L1230 1240" stroke="#949494" strokeWidth="12" />
              <path d="M30 1416H1020L1080 1402L1130 1345L1180 1305L1236 1262" stroke="#d8d8d8" strokeWidth="15" />
              <path d="M915 460L930 570M470 715V760M138 650V720M275 650V690M60 750V800M838 170V215M637 465V505" stroke="#dadada" strokeWidth="8" />
              <path d="M1168 860L1185 960L1212 1180" stroke="#d0d0d0" strokeWidth="16" />
            </g>
            <g filter="url(#soft)">
              {patches.map((p, i) => (
                <ellipse key={i} cx={p.x} cy={p.y} rx={p.rx} ry={p.ry} fill={`rgb(${p.v},${p.v},${p.v})`} opacity=".6" />
              ))}
              {[[60, 702], [85, 698], [240, 706], [205, 704], [340, 668], [455, 694], [625, 690], [930, 688], [1005, 688], [1048, 687]].map(([x, y]) => (
                <ellipse key={x} cx={x} cy={y} rx="17" ry="10" fill="#484848" />
              ))}
            </g>
          </g>
        </g>
      </g>
      <g transform={TO_PX}>
        <Specks />
        {PLOTS.map((p) => (
          <polygon key={p} points={p} fill="#7e8b8f" stroke="#232323" strokeWidth="3.600" strokeLinejoin="round" />
        ))}
      </g>
    </svg>
  );
}

/* ---------- form controls ---------- */

function Combo({ className, children }: { className: string; children: ReactNode }) {
  return (
    <div className={`flex shrink-0 items-center justify-between rounded-[3px] border border-[#a9a9a9] bg-linear-to-b from-[#fefefe] to-[#f0f0f0] pl-[4px] pr-[10px] ${className}`}>
      <div className="flex overflow-hidden">{children}</div>
      <Tri />
    </div>
  );
}

function Check({ checked = false, disabled = false }: { checked?: boolean; disabled?: boolean }) {
  return (
    <div className={`flex size-[21px] shrink-0 items-center justify-center border ${disabled ? "border-[#bcbcbc] bg-[#efefef]" : "border-[#b0b0b0] bg-white"}`}>
      {checked && (
        <Svg s={17} vb={17}>
          <path d="M2 9.500l4.500 6L15 1.500" fill="none" stroke="#000" strokeWidth="2.600" />
        </Svg>
      )}
    </div>
  );
}

function ClearX() {
  return (
    <svg width="13" height="12" viewBox="0 0 13 12" className="shrink-0">
      <path d="M0 6l4-5h9v10H4z" fill="#999" />
      <path d="M5.500 3.500l4.500 5M10 3.500l-4.500 5" stroke="#fff" strokeWidth="1.500" />
    </svg>
  );
}

function Scroll({ className, thumb }: { className: string; thumb: string }) {
  return (
    <div className={`flex shrink-0 flex-col border-l border-[#b6b6b6] bg-[#e5e5e5] ${className}`}>
      <div className="flex h-[21px] shrink-0 items-center justify-center border-b border-[#b6b6b6] bg-[#fafafa]"><Tri dir="up" /></div>
      <div className={`shrink-0 border-b border-[#b6b6b6] bg-linear-to-r from-[#fdfdfd] to-[#f2f2f2] ${thumb}`} />
      <div className="flex-1" />
      <div className="flex h-[21px] shrink-0 items-center justify-center border-t border-[#b6b6b6] bg-[#fafafa]"><Tri /></div>
    </div>
  );
}

function PushButton({ primary = false, w, children }: { primary?: boolean; w: number; children: string }) {
  return (
    <div className={`flex h-[30px] w-20 items-center justify-center rounded-[3px] border pt-[2px] ${primary ? "border-[#3aa0ee] bg-linear-to-b from-[#fbfcfd] to-[#e6edf3]" : "border-[#a9a9a9] bg-linear-to-b from-[#fefefe] to-[#f0f0f0]"}`}>
      <Fit w={w}>{children}</Fit>
    </div>
  );
}

function Dialog() {
  return (
    <div className={`absolute left-[164px] top-[226px] flex h-[590px] w-[491px] flex-col border border-[#6b6b6b] bg-[#efefef] text-black shadow-[0_5px_18px_2px_rgba(0,0,0,0.42)] ${DLG}`}>
      <div className="flex h-[44px] shrink-0 items-center bg-white pl-[11px] pr-[17px]">
        <div className="-mt-[3px]"><QLogo /></div>
        <Fit w={172} className={`ml-[5px] mt-[2px] ${UI}`}>Save Vector Layer as...</Fit>
        <div className="flex-1" />
        <Svg s={16} vb={16}><path d="M.5.5l15 15M15.500.5L.5 15.500" stroke="#000" strokeWidth="1.200" /></Svg>
      </div>

      <div className="flex flex-col gap-[9px] pl-[29px] pt-[29px]">
        <div className="flex h-[27px] items-center">
          <Fit w={50} className="mr-[41px]">Format</Fit>
          <Combo className="h-[27px] w-[340px]"><Fit w={220}>Comma Separated Value [CSV]</Fit></Combo>
        </div>
        <div className="flex h-[27px] items-center">
          <Fit w={68} className="mr-[23px]">File name</Fit>
          <div className="flex h-[27px] w-[300px] items-center rounded-[3px] border border-[#a9a9a9] bg-white pr-2">
            <div className="flex w-[270px] justify-end overflow-hidden"><Fit w={281}>Downloads\low_throughput_output.csv</Fit></div>
            <div className="ml-auto"><ClearX /></div>
          </div>
          <div className="ml-[9px] flex h-[26px] w-[31px] items-center justify-center rounded-[3px] border border-[#a9a9a9] bg-linear-to-b from-[#fefefe] to-[#f0f0f0]">
            <Fit w={12}>...</Fit>
          </div>
        </div>
        <div className="flex h-[27px] items-center">
          <Fit w={82} className="mr-[9px]">Layer name</Fit>
          <div className="h-[27px] w-[340px] rounded-[3px] border border-[#a9a9a9] bg-[#efefef]" />
        </div>
        <div className="flex h-[31px] items-center">
          <Fit w={29} className="mr-[62px]">CRS</Fit>
          <Combo className="h-[31px] w-[302px]">
            <div className="w-[266px] overflow-hidden"><Fit w={283}>EPSG:32610 - WGS 84 / UTM zone 10N</Fit></div>
          </Combo>
          <div className="ml-[6px] flex h-[31px] w-8 items-center justify-center rounded-[3px] border border-[#a9a9a9] bg-linear-to-b from-[#fefefe] to-[#f0f0f0]">
            <Svg>
              <circle cx="12" cy="12" r="9" fill="#a9cdf0" stroke="#4a7db5" />
              <path d="M7 2h9l6 9c-5 4-15 4-20 0z" fill="#c9c9c9" stroke="#777" />
              <path d="M8 2l-2 11M12 2v12M15.500 2l2.500 11M4 7h16" stroke="#777" fill="none" />
              <Badge fill="#c4a000" d="M2.500 8.500l6-6" />
            </Svg>
          </div>
        </div>
      </div>

      <div className="ml-4 mt-[22px] flex h-[299px] w-[457px] shrink-0 overflow-hidden border border-[#b6b6b6]">
        <div className="flex flex-1 flex-col pl-[13px]">
          <div className="mt-[13px] flex h-[27px] shrink-0 items-center">
            <Fit w={66} className="mr-[143px]">Encoding</Fit>
            <Combo className="h-[27px] w-[199px]"><Fit w={44}>UTF-8</Fit></Combo>
          </div>
          <div className="mt-[11px] flex h-[22px] shrink-0 items-center gap-2 text-[#848484]">
            <Check disabled /><Fit w={190}>Save only selected features</Fit>
          </div>
          <div className="mt-[10px] flex h-[22px] shrink-0 items-center pl-[2px] font-bold">
            <Tri dir="right" color="#333" /><Fit w={384} className="ml-[8px]">Select fields to export and their export options</Fit>
          </div>
          <div className="mt-[12px] flex h-[22px] shrink-0 items-center pl-[2px] font-bold">
            <Tri color="#333" /><Fit w={80} className="ml-[8px]">Geometry</Fit>
          </div>
          <div className="ml-px mt-[3px] flex h-[131px] w-[407px] shrink-0 flex-col rounded-[2px] border border-[#d3d3d3] bg-[#ececec] pl-[14px] pt-[14px]">
            <div className="flex h-8 items-center">
              <Fit w={104} className="mr-[89px] mt-px">Geometry type</Fit>
              <Combo className="h-8 w-[183px]"><Fit w={72}>Automatic</Fit></Combo>
            </div>
            <div className="mt-[11px] flex h-[22px] items-center gap-2 text-[#848484]"><Check disabled /><Fit w={115}>Force multi-type</Fit></div>
            <div className="mt-[12px] flex h-[22px] items-center gap-2 text-[#848484]"><Check disabled /><Fit w={142}>Include z-dimension</Fit></div>
          </div>
          <div className="mt-[9px] flex h-[22px] shrink-0 items-center pl-[2px] font-bold">
            <Tri dir="right" color="#333" /><div className="ml-[6px]"><Check /></div><Fit w={184} className="ml-[11px]">Extent (current: layer)</Fit>
          </div>
        </div>
        <Scroll className="h-full w-[22px]" thumb="h-[122px]" />
      </div>

      <div className="mt-[9px] flex h-[30px] items-center pl-4">
        <Check />
        <Fit w={154} className="ml-[9px]">Add saved file to map</Fit>
        <div className="ml-[15px] flex gap-[9px]">
          <PushButton primary w={21}>OK</PushButton>
          <PushButton w={46}>Cancel</PushButton>
          <PushButton w={33}>Help</PushButton>
        </div>
      </div>
    </div>
  );
}

/* ---------- docks ---------- */

function LayersDock() {
  const legend: [string, string][] = [["0.3", "bg-[#d7191c]"], ["0.4", "bg-[#fdae61]"], ["0.5", "bg-[#ffffc0]"], ["0.6", "bg-[#a6d96a]"], ["0.7", "bg-[#1a9641]"]];
  return (
    <div className="flex w-[374px] shrink-0 flex-col">
      <div className="flex h-[27px] items-center pb-[2px] pl-1"><Fit w={49}>Layers</Fit></div>
      <div className="flex h-[30px] items-center gap-[9px] pb-[6px] pl-[10px]">
        <Svg s={16}><path d="M1 10l9-3 5 5-4 9-8-4z" fill="#f3b53c" /><path d="M1 9l5 10 4-7z" fill="#d9443b" /><path d="M4 8l6 7 2-8z" fill="#f6d23c" /><path d="M13 12l9-9" stroke="#b8803c" strokeWidth="3.500" /></Svg>
        <Svg s={16}><path d="M2 8v14h10M6 5v14h11V5z" fill="#eee" stroke="#777" strokeWidth="1.600" /><path d="M11.500 16V2M8 6l3.500-4L15 6" stroke="#3c6ea5" strokeWidth="2" fill="none" /><Badge fill="#5b9a5f" d={PLUS} /></Svg>
        <Svg s={18}><path d="M1 12C6 4 17 4 22 12 17 19 6 19 1 12z" fill="#e8eef4" stroke="#666" strokeWidth="1.600" /><circle cx="12" cy="11.500" r="5" fill="#5b7fa5" /><path d="M12 13h12l-6 7z" fill="#444" /></Svg>
        <Svg s={16} className="-ml-[2px]"><path d="M1 2h22v4l-8 7v10l-6-3v-7L1 6z" fill="#6590c4" stroke="#3c6090" /><path d="M1 3h22" stroke="#f4d52c" strokeWidth="4" /></Svg>
        <Svg s={18}><path d="M10 4C9 1 3 1 3 5c0 2 2 3 4 3-3 0-5.500 1-5.500 4 0 4.500 8 4 9.500 0" fill="none" stroke="#7b5a88" strokeWidth="2.300" /><path d="M13 22v-6c0-3 8-3 8 0v6" fill="none" stroke="#aaa" strokeWidth="3" /></Svg>
        <div className="-ml-1"><Tri /></div>
        <Svg s={16}><path d="M2 2h7M2 2v20h7" stroke="#777" strokeWidth="2" fill="none" /><rect x="6" y="4" width="7" height="6" fill="#f0972d" /><rect x="6" y="14" width="7" height="6" fill="#f0972d" /><path d="M16 2h7v20l-7-8z" fill="#4a7db5" /></Svg>
      </div>
      <div className="flex flex-1 flex-col border border-[#b4b4b4] bg-white">
        <div className="flex h-[27px] items-center bg-[#efefef] pl-[33px]">
          <Check checked />
          <div className="ml-[6px] size-[22px] border border-[#2f5673] bg-[#5987a8]" />
          <Fit w={206} className="ml-[6px] mt-[2px] font-bold"><span className="underline decoration-1 underline-offset-2">low_throughput_output</span></Fit>
        </div>
        <div className="flex h-[27px] items-center pl-[9px]">
          <Tri /><div className="ml-3"><Check checked /></div>
          <Svg s={20} vb={20} className="ml-[9px]">
            <rect width="20" height="20" fill="#aec9e8" />
            <path d="M0 0h6v6H0zM13 0h7v6h-7zM6 6h7v7H6zM0 13h6v7H0z" fill="#2c3a4c" />
            <path d="M6 0h7v6H6zM0 6h6v7H0z" fill="#7690b4" opacity=".6" />
            <path d="M13 13h7v7h-7z" fill="#fff" />
          </Svg>
          <Fit w={119} className="ml-[7px] mt-[2px] font-bold">Solano_4band</Fit>
        </div>
        {legend.map(([label, color]) => (
          <div key={label} className="flex h-[27px] items-center pl-[63px]">
            <div className={`mb-[2px] size-5 ${color}`} />
            <Fit w={23} className="ml-[6px] mt-[2px]">{label}</Fit>
          </div>
        ))}
      </div>
    </div>
  );
}

function DockButtons() {
  return (
    <div className="mb-[2px] ml-auto flex gap-[3px] pr-px">
      <Svg s={12} vb={12}><rect x=".7" y=".7" width="10.600" height="10.600" rx="2" fill="none" stroke="#555" strokeWidth="1.200" /><path d="M3 5h4v4H3zM5 5V3h4v4H7" fill="none" stroke="#555" /></Svg>
      <Svg s={12} vb={12}><rect x=".7" y=".7" width="10.600" height="10.600" rx="2" fill="none" stroke="#555" strokeWidth="1.200" /><path d="M3.300 3.300l5.400 5.400M8.700 3.300L3.300 8.700" stroke="#444" strokeWidth="2.200" /></Svg>
    </div>
  );
}

function TreeRow({ level = 0, open, icon, w, sel = false, children }: { level?: number; open?: boolean; icon?: ReactNode; w: number; sel?: boolean; children: string }) {
  return (
    <div className={`flex h-[27px] shrink-0 items-center ${sel ? "bg-[#efefef]" : ""} ${level === 2 ? "pl-[63px]" : level === 1 ? "pl-[39px]" : "pl-[9px]"}`}>
      {open !== undefined && <div className="pb-px"><Tri dir={open ? "down" : "right"} /></div>}
      {icon && <div className={level === 2 ? "pb-[3px]" : "ml-[12px] pb-[2px]"}><Svg s={23}>{icon}</Svg></div>}
      <Fit w={w} className={icon ? "ml-[7px] mt-[3px]" : "ml-[12px] mt-[2px]"}>{children}</Fit>
    </div>
  );
}

function RightDocks() {
  return (
    <div className="flex w-[361px] shrink-0 flex-col">
      <div className="flex h-[27px] items-center pb-[2px] pl-1"><Fit w={153}>Processing Toolbox</Fit><DockButtons /></div>
      <div className="flex h-[30px] items-center pb-[6px] pl-[9px]">
        <Svg s={18}><g transform="scale(.6)"><Gear c="#d9302c" o="#b01c1c" /></g><g transform="translate(11 7) scale(.5)"><Gear c="#888" o="#666" /></g><g transform="translate(8 14) scale(.4)"><Gear c="#9cc0ea" o="#7ba3d8" /></g><path d="M12 13h12l-6 7z" fill="#333" /></Svg>
        <Svg s={18} className="ml-2"><ellipse cx="11" cy="10" rx="9.500" ry="6" fill="none" stroke="#9aa2ac" strokeWidth="4" /><text x="8" y="20" fontSize="17" fontWeight="700" fontFamily="Liberation Sans" fill="#1d4fa0">R</text><path d="M13 14h11l-5 6z" fill="#333" /></Svg>
        <Svg s={17} className="ml-[7px]"><Python /><path d="M13 14h11l-5 6z" fill="#333" /></Svg>
        <Svg s={16} className="ml-[8px]"><Clock /></Svg>
        <div className="ml-[4px] flex h-[23px] w-6 items-center justify-center rounded-[2px] border border-[#a6a6a6] bg-[#dcdcdc]">
          <Svg s={16}><path d="M4 1h11l6 6v16H4z" fill="#f4f4f4" stroke="#999" strokeWidth="1.400" /><path d="M7 9h10M7 13h10M7 17h7" stroke="#999" strokeWidth="1.600" /></Svg>
        </div>
        <div className="ml-[5px] h-3 w-px bg-[#ccc]" />
        <Svg s={16} className="ml-[9px]"><path d="M1 3h19v10l-6 6H1z" fill="#fbe34b" stroke="#d0b020" /><path d="M11 21L20 7l3 2-9 14z" fill="#e8cc60" stroke="#a08a20" /></Svg>
        <div className="ml-[9px] h-3 w-px bg-[#ccc]" />
        <Svg s={17} className="ml-[9px]"><Wrench /></Svg>
      </div>
      <div className="flex h-[27px] shrink-0 items-center rounded-[2px] border border-[#a9a9a9] bg-white pl-2 pr-2">
        <Svg s={13} vb={13}><circle cx="5" cy="5" r="4.200" fill="none" stroke="#999" strokeWidth="1.300" /><path d="M8 8l4.500 4.500" stroke="#999" strokeWidth="1.600" /></Svg>
        <Fit w={37} className={`ml-[7px] ${DLG}`}>zonal</Fit>
        <div className="ml-auto"><ClearX /></div>
      </div>
      <div className="flex h-[188px] shrink-0 overflow-hidden border border-[#b4b4b4] bg-white">
        <div className="flex flex-1 flex-col">
          <TreeRow open={false} w={107} icon={<Clock />}>Recently used</TreeRow>
          <TreeRow open w={114} icon={<g><circle cx="11.500" cy="11.300" r="9.200" fill="none" stroke="#76a32b" strokeWidth="4.600" /><path d="M9 8.300h6l-1 2.200-2.400 2.800L9.500 14z" fill="#ee7913" /><path d="M13.800 12l-2.600 2.600L20 23.500h3.700V20z" fill="#6fa536" stroke="#fff" strokeWidth=".5" /></g>}>Raster analysis</TreeRow>
          <TreeRow level={2} w={210} icon={<Gear />}>Raster layer zonal statistics</TreeRow>
          <TreeRow level={2} w={130} icon={<Gear />}>Zonal histogram</TreeRow>
          <TreeRow level={2} w={116} sel icon={<g><rect x="1" y="1" width="13" height="13" fill="#2a6496" /><path d="M5 1h4v4H5zM9 5h5v4H9z" fill="#5f95c2" /><path d="M14 12h9v2.500h-6l3 3.500-3.500 4H23V24H13.500l4-6z" fill="#9b3fa8" /></g>}>Zonal statistics</TreeRow>
          <TreeRow open w={54} icon={<g><path d="M12 1l10 11-10 10L2 12z" fill="#fff" stroke="#666" /><path d="M12 18V5M12 18L7 8M12 18l5-9M12 18l-6-5M12 18l6-5" stroke="#25a046" strokeWidth="1.500" /><path d="M4 16l8 6 8-6M3 23h18" stroke="#555" fill="none" strokeWidth="1.500" /></g>}>GRASS</TreeRow>
          <TreeRow level={1} open w={81}>Raster (r.*)</TreeRow>
        </div>
        <Scroll className="h-full w-[21px]" thumb="h-[85px]" />
      </div>
      <div className="flex h-[9px] shrink-0 items-center justify-center"><div className="w-[17px] border-t border-dotted border-[#b0b0b0]" /></div>
      <div className="flex h-[21px] shrink-0 items-center pl-1 pt-px"><Fit w={112}>Results Viewer</Fit><DockButtons /></div>
      <div className="h-[221px] shrink-0 border border-[#b4b4b4] bg-white" />
      <div className="flex h-[6px] shrink-0 items-center justify-center"><div className="w-[17px] border-t border-dotted border-[#b0b0b0]" /></div>
      <div className="flex-1 border border-[#b4b4b4] bg-white" />
    </div>
  );
}

/* ---------- status bar ---------- */

function Spin({ className, children }: { className: string; children: ReactNode }) {
  return (
    <div className={`flex h-[27px] items-center overflow-hidden rounded-[3px] border border-[#a9a9a9] bg-white pl-[4px] ${className}`}>
      {children}
      <div className="ml-auto flex h-full w-[21px] flex-col items-center justify-center border-l border-[#b6b6b6] bg-[#f6f6f6]">
        <Tri dir="up" /><Tri />
      </div>
    </div>
  );
}

function StatusBar() {
  return (
    <div className={`flex h-9 shrink-0 items-center bg-[#efefef] pl-1 pt-px ${DLG}`}>
      <div className="flex h-[27px] w-[293px] items-center rounded-[3px] border border-[#a9a9a9] bg-white pl-2 text-[#8a8a8a]">
        <Svg s={13} vb={13}><circle cx="5" cy="5" r="4.200" fill="none" stroke="#999" strokeWidth="1.300" /><path d="M8 8l4.500 4.500" stroke="#999" strokeWidth="1.600" /></Svg>
        <Fit w={163} className="ml-[7px]">Type to locate (Ctrl+K)</Fit>
      </div>
      <Fit w={314} className="ml-2">Toggles the editing state of the current layer</Fit>
      <Fit w={77} className="ml-[196px]">Coordinate</Fit>
      <div className="ml-[3px] flex h-[27px] w-[166px] items-center rounded-[3px] border border-[#a9a9a9] bg-white pl-[6px]"><Fit w={150}>606941.8,4260266.4</Fit></div>
      <Svg s={24} className="ml-[4px]">
        <g transform="rotate(-30 10 10)"><rect x="5" y="1" width="10" height="16" rx="5" fill="#fff" stroke="#111" strokeWidth="2" /><path d="M10 1v8M7 3v5M13 3v5" stroke="#111" strokeWidth="1.600" /></g>
        <circle cx="14" cy="17" r="5.500" fill="#fff" stroke="#111" strokeWidth="2" /><circle cx="14" cy="17" r="1.600" fill="#111" /><path d="M15 5l7-3M1 16l4-3" stroke="#111" strokeDasharray="2 2" strokeWidth="1.500" />
      </Svg>
      <Fit w={36} className="ml-[13px]">Scale</Fit>
      <div className="ml-[2px] flex h-[27px] w-[113px] items-center overflow-hidden rounded-[3px] border border-[#a9a9a9] bg-white pl-[4px]">
        <Fit w={51}>1:4040</Fit>
        <div className="ml-auto flex h-full w-7 items-center justify-center bg-linear-to-b from-[#fbfbfb] to-[#efefef]"><Tri /></div>
      </div>
      <svg width="19" height="24" viewBox="0 0 19 24" className="ml-[14px]"><path d="M4 11V7c0-7.500 11-7.500 11 0v4" fill="none" stroke="#aaa" strokeWidth="2.600" /><rect x=".5" y="10.500" width="18" height="13" rx="1.500" fill="#666" /></svg>
      <Fit w={65} className="ml-[9px]">Magnifier</Fit>
      <Spin className="ml-[3px] w-[104px]"><Fit w={42}>100%</Fit></Spin>
      <Fit w={58} className="ml-[10px]">Rotation</Fit>
      <Spin className="ml-[10px] w-[101px]"><Fit w={36}>0.0 °</Fit></Spin>
      <div className="ml-[7px]"><Check checked /></div>
      <Fit w={50} className="ml-[8px]">Render</Fit>
      <Svg s={23} className="ml-[17px]"><circle cx="12" cy="12" r="9.500" fill="#ddd" stroke="#777" strokeWidth="1.400" /><path d="M7 2h10l6 9c-5 3-17 3-22 0zM4 7h16M8.500 2C6 8 6 17 9 21M15.500 2c2.500 6 2.500 15-.5 19M12 2v20M3 16h18" fill="none" stroke="#777" strokeWidth="1.400" /></Svg>
      <Fit w={89} className="ml-[5px]">EPSG:32610</Fit>
      <Svg s={25} className="ml-[22px]"><path d="M12 1c6.500 0 11.500 4 11.500 9 0 3.500-2 6-5 7.500 0 2 1.500 3.500 3.500 4.500-4 .5-7-1-8.500-3H12C5.500 19 .5 15 .5 10S5.500 1 12 1z" fill="#5c5c5c" /><g fill="#fff"><circle cx="7" cy="10" r="1.700" /><circle cx="12" cy="10" r="1.700" /><circle cx="17" cy="10" r="1.700" /></g></Svg>
    </div>
  );
}

/* ---------- taskbar ---------- */

function Task({ children, active = false, more = false }: { children: ReactNode; active?: boolean; more?: boolean }) {
  return (
    <div className={`flex h-[60px] shrink-0 flex-col items-center justify-between ${active ? "w-[73px] bg-[#6a6a61]" : "w-[61px]"}`}>
      <div className="flex flex-1 items-center pt-[2px]">{children}</div>
      <div className="flex h-[3px] w-full bg-[#76b9ed]">{more && <div className="ml-auto w-[14px] bg-[#5a8fba]" />}</div>
    </div>
  );
}

function Taskbar() {
  return (
    <div className="flex h-[60px] shrink-0 bg-[#2e2c21] text-white">
      <div className="flex w-[72px] items-center justify-center">
        <Svg s={24}><path d="M0 3.500L10 2v9.500H0zM11 1.800L24 0v11.500H11zM0 12.500h10V22L0 20.500zM11 12.500h13V24l-13-1.800z" fill="#fff" /></Svg>
      </div>
      <div className="flex w-[516px] items-center border-2 border-[#c1c1c1] bg-[#f2f2f2] pl-4">
        <Svg s={25}><circle cx="15.500" cy="8.500" r="7.500" fill="none" stroke="#111" strokeWidth="1.600" /><path d="M10 14L.8 23.300" stroke="#111" strokeWidth="1.600" /></Svg>
        <Fit w={198} className="ml-[17px] mt-1 font-['Open_Sans',sans-serif] text-[21px] text-[#2d2d2d]">Type here to search</Fit>
      </div>
      <div className="flex w-[72px] items-center justify-center">
        <Svg s={24}><circle cx="12" cy="12" r="10" fill="none" stroke="#f4f4f4" strokeWidth="3" /></Svg>
      </div>
      <div className="flex w-[71px] items-center justify-center">
        <Svg s={25}><path d="M1 0v4h15V0M1 7h15v10H1zM1 24v-4h15v4M22.500 0v6M22.500 12v12" fill="none" stroke="#fff" strokeWidth="1.400" /><rect x="21" y="7.500" width="3" height="3" fill="#fff" /></Svg>
      </div>
      <div className="ml-3 flex items-end gap-[14px]">
        <Task more>
          <Svg s={34} vb={48}><circle cx="24" cy="24" r="23" fill="#4caf50" /><path d="M24 24L4 12.500A23 23 0 0 1 44 12.500H24z" fill="#db4437" /><path d="M4 12.500A23 23 0 0 0 22 47l9-18-17-1z" fill="#0f9d58" /><path d="M44 13A23 23 0 0 1 22 47l10-17 1-17z" fill="#ffcd40" /><path d="M24 13h20" stroke="#db4437" strokeWidth="2" /><circle cx="24" cy="24" r="10.500" fill="#f1f1f1" /><circle cx="24" cy="24" r="8.300" fill="#4285f4" /></Svg>
        </Task>
        <Task>
          <Svg s={34} vb={34}><defs><linearGradient id="rb" x1="0" y1="0" x2="0" y2="1"><stop offset="0" stopColor="#a8c4ee" /><stop offset=".4" stopColor="#2560c0" /><stop offset="1" stopColor="#4aa8ee" /></linearGradient></defs><circle cx="17" cy="17" r="16.500" fill="url(#rb)" stroke="#1c50a8" /><text x="10.500" y="23.500" fontSize="20" fontFamily="Liberation Serif" fill="#fff">R</text></Svg>
        </Task>
        <Task more>
          <Svg s={34} vb={34}><path d="M1 4h12l3 4H1z" fill="#e0a010" /><path d="M1 8h32v21H1z" fill="#fdd667" /><path d="M7 31V20q0-2 2-2h16q2 0 2 2v11h-6v-6h-8v6z" fill="#3a9be0" /></Svg>
        </Task>
        <Task>
          <Svg s={34} vb={34}><circle cx="17" cy="17" r="16.500" fill="#fff" /><path d="M12.500 5.500c3-.8 6-.5 8 1.500 5 .5 6 3 6 8 0 7-1 13-6 13-3.500 0-4.500-2-4.500-4.500s3-2.800 4-1.500v2c1.500-.5 1.500-3.500 0-4.500-2 0-3.500-.5-4-1.500-1 3-3.500 3.500-6.500 2.500-1.500-2-2.500-5-2.500-9h5q1 0 1-1zM6.500 10.500L11.500 6v4.500z" fill="#14a814" /><path d="M21 15.500c.3-1.800 2.300-1.800 2.700.3z" fill="#fff" /></Svg>
        </Task>
        <div className="-mx-[6px]"><Task active><QLogo s={35} /></Task></div>
        <Task>
          <Svg s={36} vb={36}><rect width="36" height="36" rx="3" fill="#4a4a4a" /><path d="M9 12l18-5.500v6.500l-9.500 3L27 19v5.500L9 30v-6.500l9.500-3L9 17.500z" fill="#ff9a0e" /></Svg>
        </Task>
        <Task>
          <Svg s={36} vb={36}><path d="M18 0l8 8-8 7-8-7z" fill="#f07f7f" /><path d="M9 9l7 8-7 9-9-9z" fill="#7fb0f8" /><path d="M27 9l9 8-9 9-7-9z" fill="#86d06a" /><path d="M18 20l8 8-8 8-8-8z" fill="#ffe27a" /><path d="M12 5l7 8v12M18 13l8 5" stroke="#2e2c21" strokeWidth="2" fill="none" /><circle cx="18.500" cy="23" r="2.400" fill="#2e2c21" /><circle cx="25" cy="18" r="2.400" fill="#2e2c21" /></Svg>
        </Task>
        <Task>
          <Svg s={36} vb={36}><ellipse cx="14" cy="17" rx="13" ry="8" transform="rotate(-20 14 17)" fill="#8a7f7c" /><ellipse cx="17" cy="10" rx="15" ry="8" transform="rotate(-15 17 10)" fill="#f5f5f5" stroke="#d8352c" strokeWidth="1.500" /><path d="M11 7l12 16M21 4l-2 20" stroke="#8c8c8c" strokeWidth="1.600" /><ellipse cx="20" cy="29" rx="2.500" ry="5.500" fill="none" stroke="#1e87c9" strokeWidth="2.400" /><ellipse cx="28" cy="23" rx="6" ry="2.800" transform="rotate(30 28 23)" fill="none" stroke="#1e87c9" strokeWidth="2.400" /></Svg>
        </Task>
      </div>
      <div className="ml-auto flex items-center">
        <Svg s={18} vb={18}><path d="M1 13l8-8.500L17 13" fill="none" stroke="#fff" strokeWidth="1.400" /></Svg>
        <Svg s={24} className="ml-[14px]"><path d="M1.500 4v4c0 3 5 3 5 0V4M2.500 1v3M5.500 1v3M4 10v9h3" fill="none" stroke="#fff" strokeWidth="1.300" /><rect x="6" y="5.500" width="15.500" height="12.500" fill="none" stroke="#fff" strokeWidth="1.300" /><rect x="8" y="7.500" width="11.500" height="8.500" fill="#fff" /><path d="M23 9v5" stroke="#fff" strokeWidth="1.600" /></Svg>
        <Svg s={20} vb={20} className="ml-4"><path d="M1 18A18 17 0 0 1 19 1.500M5.500 19A13.500 12.500 0 0 1 19 6.500M10 19.500A9 8.500 0 0 1 19 11.500" fill="none" stroke="#ddd" strokeWidth="1.500" /><circle cx="17" cy="17.500" r="1.800" fill="#fff" /></Svg>
        <Svg s={21} vb={21} className="ml-[13px]"><path d="M1 7h3.500L10 1.500v18L4.500 14H1z" fill="none" stroke="#fff" strokeWidth="1.400" /><path d="M13.500 7l6.500 7M20 7l-6.500 7" stroke="#fff" strokeWidth="1.300" /></Svg>
        <Svg s={24} className="ml-[14px]"><path d="M6 1l6 4-6 4-6-4zM18 1l6 4-6 4-6-4zM6 9l6 4-6 4-6-4zM18 9l6 4-6 4-6-4zM12 15l6 4-6 4-6-4z" fill="#fff" /></Svg>
        <Svg s={24} className="ml-[12px]"><path d="M6 20a6 6 0 0 1-1-11.800A7.500 7.500 0 0 1 19 9a5.600 5.600 0 0 1 0 11z" fill="#fff" /><path d="M12 17v-6M9 13.500l3-3.500 3 3.500" stroke="#2e2c21" strokeWidth="2.200" fill="none" /></Svg>
        <div className="ml-[19px] flex w-[76px] flex-col items-center gap-[5px] font-['Open_Sans',sans-serif] text-[17px] leading-[23px]">
          <Fit w={65}>8:03 PM</Fit>
          <Fit w={74}>6/1/2020</Fit>
        </div>
        <Svg s={26} className="ml-[31px]"><path d="M1 1.500h22v17h-8.500L12 22.500l-3.500-4H1z" fill="none" stroke="#fff" strokeWidth="1.300" /></Svg>
        <div className="ml-[31px] mr-[6px] h-[60px] w-px bg-[#8a8982]" />
      </div>
    </div>
  );
}

/* ---------- page ---------- */

export default function App() {
  return (
    <div className={`relative flex h-[1080px] w-[1920px] flex-col overflow-hidden bg-[#efefef] leading-[22px] text-black ${UI}`}>
      <div className="flex h-[34px] shrink-0 items-center bg-white pl-[2px] text-[#999]">
        <QLogo />
        <Fit w={226} className="ml-[5px] mt-px">*Drone Camp Testing - QGIS</Fit>
        <div className="ml-auto flex items-center pr-[29px]">
          <Svg s={15} vb={15}><path d="M0 7.500h15" stroke="#999" strokeWidth="1.200" /></Svg>
          <Svg s={16} vb={16} className="ml-[53px] mr-[55px]"><path d="M.6 4h11.400v11.400H.6zM4 4V.6h11.400V12H12" fill="none" stroke="#999" strokeWidth="1.200" /></Svg>
          <Svg s={15} vb={15}><path d="M.5.5l14 14M14.500.5L.5 14.500" stroke="#999" strokeWidth="1.200" /></Svg>
        </div>
      </div>
      <div className="flex h-[30px] shrink-0 items-center gap-[17px] border-b border-[#d2d2d2] pl-[13px] pt-[2px] text-[#999]">
        {menus.map(([a, b, c, w]) => (
          <Fit key={a + b + c} w={w}>{a}<span className="underline decoration-1 underline-offset-2">{b}</span>{c}</Fit>
        ))}
      </div>
      <div className="flex shrink-0 flex-col">
        {rows.map((s) => <Toolbar key={s} spec={s} />)}
      </div>
      <div className="-mt-px flex flex-1">
        <LayersDock />
        <div className="ml-[9px] mt-px flex flex-1 border border-[#b4b4b4] bg-white"><MapCanvas /></div>
        <div className="flex w-[9px] items-center justify-center"><div className="mb-3 h-[17px] border-l border-dotted border-[#b0b0b0]" /></div>
        <RightDocks />
      </div>
      <StatusBar />
      <Taskbar />
      <Dialog />
    </div>
  );
}
